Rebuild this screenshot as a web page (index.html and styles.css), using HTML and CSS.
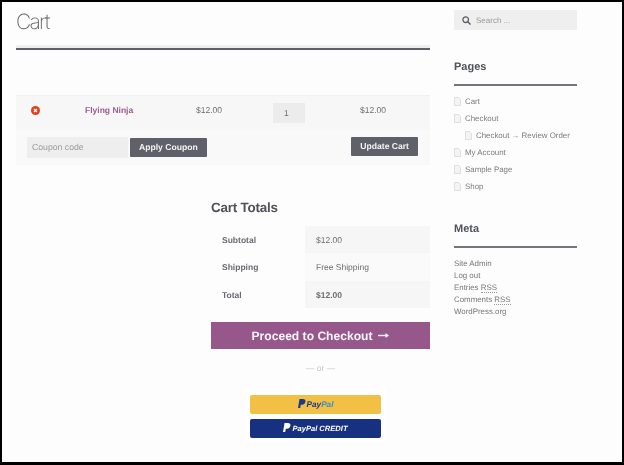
FILE: index.html
```html
<!DOCTYPE html>
<html lang="en">
<head>
<meta charset="utf-8">
<title>Cart</title>
<link rel="stylesheet" href="styles.css">
</head>
<body>
<div class="frame">
  <div class="page">
    <main class="main">
      <h1 class="title">Cart</h1>
      <div class="cart">
        <div class="row-item">
          <span class="c-remove"><svg width="9" height="9" viewBox="0 0 9 9"><circle cx="4.5" cy="4.5" r="4.5" fill="#e2401c"/><path d="M3 3l3 3M6 3l-3 3" stroke="#fff" stroke-width="1.3"/></svg></span>
          <a class="c-name">Flying Ninja</a>
          <span class="c-price">$12.00</span>
          <span class="c-qty"><span class="qty">1</span></span>
          <span class="c-total">$12.00</span>
        </div>
        <div class="row-actions">
          <div class="coupon">
            <span class="coupon-input">Coupon code</span>
            <span class="btn">Apply Coupon</span>
          </div>
          <span class="btn btn-update">Update Cart</span>
        </div>
      </div>
      <section class="totals">
        <h2 class="totals-title">Cart Totals</h2>
        <div class="totals-table">
          <div class="t-head">Subtotal</div><div class="t-val">$12.00</div>
          <div class="t-head t-alt">Shipping</div><div class="t-val t-alt">Free Shipping</div>
          <div class="t-head">Total</div><div class="t-val t-bold">$12.00</div>
        </div>
        <div class="checkout">Proceed to Checkout<svg class="arrow" width="11" height="7" viewBox="0 0 11 7"><path d="M0 3.5h10" stroke="#f8f3f7" stroke-width="1.4"/><path d="M7.5 1l3.5 2.5L7.5 6z" fill="#f8f3f7"/></svg></div>
        <div class="or">— or —</div>
        <div class="pp-box">
          <div class="pp pp-gold"><svg class="pp-mark" width="8" height="10" viewBox="0 0 8 10"><path d="M1.5 0h3.4C6.8 0 7.8 1 7.4 2.8 7 4.8 5.7 5.7 3.9 5.7H2.8L2.2 9H0z" fill="#1a3a8a"/></svg><span class="pp-a">Pay</span><span class="pp-b">Pal</span></div>
          <div class="pp pp-blue"><svg class="pp-mark" width="8" height="10" viewBox="0 0 8 10"><path d="M1.5 0h3.4C6.8 0 7.8 1 7.4 2.8 7 4.8 5.7 5.7 3.9 5.7H2.8L2.2 9H0z" fill="#fff"/></svg><span class="pp-w">PayPal</span><span class="pp-c">CREDIT</span></div>
        </div>
      </section>
    </main>
    <aside class="side">
      <div class="search"><svg width="9" height="9" viewBox="0 0 9 9"><circle cx="3.7" cy="3.7" r="2.8" fill="none" stroke="#5c5d66" stroke-width="1.3"/><path d="M5.8 5.8L8.5 8.5" stroke="#5c5d66" stroke-width="1.5"/></svg><span>Search ...</span></div>
      <h3 class="w-title w-pages">Pages</h3>
      <ul class="pages">
        <li><svg class="doc" viewBox="0 0 7 9"><path d="M.5.5h4l2 2v6h-6z" fill="#f4f4f4" stroke="#d8d8d8" stroke-width=".8"/></svg>Cart</li>
        <li><svg class="doc" viewBox="0 0 7 9"><path d="M.5.5h4l2 2v6h-6z" fill="#f4f4f4" stroke="#d8d8d8" stroke-width=".8"/></svg>Checkout</li>
        <li class="child"><svg class="doc" viewBox="0 0 7 9"><path d="M.5.5h4l2 2v6h-6z" fill="#f4f4f4" stroke="#d8d8d8" stroke-width=".8"/></svg>Checkout → Review Order</li>
        <li><svg class="doc" viewBox="0 0 7 9"><path d="M.5.5h4l2 2v6h-6z" fill="#f4f4f4" stroke="#d8d8d8" stroke-width=".8"/></svg>My Account</li>
        <li><svg class="doc" viewBox="0 0 7 9"><path d="M.5.5h4l2 2v6h-6z" fill="#f4f4f4" stroke="#d8d8d8" stroke-width=".8"/></svg>Sample Page</li>
        <li><svg class="doc" viewBox="0 0 7 9"><path d="M.5.5h4l2 2v6h-6z" fill="#f4f4f4" stroke="#d8d8d8" stroke-width=".8"/></svg>Shop</li>
      </ul>
      <h3 class="w-title w-meta">Meta</h3>
      <ul class="meta">
        <li>Site Admin</li>
        <li>Log out</li>
        <li>Entries <abbr>RSS</abbr></li>
        <li>Comments <abbr>RSS</abbr></li>
        <li>WordPress.org</li>
      </ul>
    </aside>
  </div>
</div>
</body>
</html>
```
FILE: styles.css
```css
* { box-sizing: border-box; }
html, body { margin: 0; padding: 0; background: #000; }
body { width: 624px; height: 465px; overflow: hidden; font-family: "Liberation Sans", Arial, sans-serif; font-size: 8.5px; color: #6d6d6d; text-rendering: geometricPrecision; }
.frame { width: 620px; height: 460px; margin: 2px 0 0 2px; background: #fdfdfd; overflow: hidden; }
.page { display: flex; filter: blur(0.35px); padding-left: 14px; }
.main { width: 414px; }
.side { width: 123px; margin-left: 24px; padding-top: 8px; }
.title { margin: 0; padding-top: 8px; height: 48px; border-bottom: 2px solid #5f6066; box-shadow: inset 0 -3px 0 #efefef; font-family: Inter, sans-serif; font-weight: 200; font-size: 21px; line-height: 26px; letter-spacing: -1.8px; color: #666; }
.cart { margin-top: 45px; }
.row-item { display: grid; grid-template-columns: 54px 126px 63px 86px 85px; height: 35px; padding-bottom: 7px; align-items: center; background: #f7f7f7; border-top: 1px solid #f0f0f0; }
.c-remove { display: flex; padding-left: 15px; margin-top: 2px; }
.c-name { color: #9a5c8f; font-weight: 700; padding-left: 15px; }
.c-qty { display: flex; padding-left: 14px; }
.qty { width: 32px; height: 20px; background: #ececec; line-height: 21px; padding-left: 11px; margin-top: 7px; }
.c-total { padding-left: 15px; }
.row-actions { display: flex; justify-content: space-between; align-items: center; height: 35px; background: #f9f9f9; padding: 0 12px 0 11px; }
.coupon { display: flex; gap: 2px; align-items: center; }
.coupon-input { width: 101px; height: 21px; background: #eeeeee; padding-left: 5px; line-height: 21px; color: #9a9a9a; font-size: 8.7px; }
.btn { display: block; height: 19px; background: #5f6069; color: #f4f4f4; font-weight: 700; font-size: 8.6px; line-height: 19px; padding: 0 9px; border-radius: 1px; }
.btn-update { margin-bottom: 2px; }
.totals { margin-left: 195px; width: 219px; }
.totals-title { margin: 34px 0 0; font-size: 13.4px; line-height: 18px; letter-spacing: -0.2px; color: #50525a; font-weight: 700; }
.totals-table { display: grid; grid-template-columns: 94px 125px; margin-top: 9px; grid-auto-rows: 27.4px; }
.t-head { font-weight: 700; padding-left: 11px; line-height: 28px; color: #6a6b72; }
.t-val { background: #f6f6f6; padding-left: 11px; line-height: 28px; }
.t-val.t-alt { background: #fafafa; }
.t-bold { font-weight: 700; }
.checkout { margin-top: 14px; height: 27px; background: #96588a; color: #f8f3f7; font-weight: 700; font-size: 12.1px; display: flex; align-items: center; justify-content: center; }
.arrow { margin-left: 6px; }
.or { text-align: center; margin-top: 13px; line-height: 12px; color: #c4c4c4; }
.pp-box { margin: 14px 0 0 34px; width: 141px; background: #fff; display: flex; flex-direction: column; gap: 5.5px; padding: 7px 5px 3px; }
.pp { height: 18.5px; border-radius: 2px; display: flex; align-items: center; justify-content: center; font-style: italic; font-weight: 700; font-size: 8.2px; }
.pp-gold { background: #f1c044; }
.pp-blue { background: #17307f; color: #fff; font-size: 7.6px; }
.pp-mark { margin-right: 1px; }
.pp-a { color: #1a3a8a; }
.pp-b { color: #3c8fc9; }
.pp-c { margin-left: 2px; }
.search { height: 20px; background: #efefef; display: flex; align-items: center; gap: 5px; padding-left: 8px; color: #9a9a9a; font-size: 8px; }
.w-title { margin: 0; font-size: 11px; line-height: 14px; color: #50525a; font-weight: 700; border-bottom: 2px solid #75767d; }
.w-pages { margin-top: 29px; height: 27px; padding-top: 1px; }
.w-meta { margin-top: 25px; height: 28px; padding-top: 2px; }
.pages, .meta { list-style: none; margin: 0; padding: 0; color: #7c7c7c; font-size: 7.9px; }
.pages { margin-top: 7px; }
.pages li { height: 17px; display: flex; align-items: center; gap: 4px; white-space: nowrap; }
.pages li.child { padding-left: 11px; }
.doc { width: 7px; height: 9px; flex: none; }
.meta { margin-top: 10px; line-height: 12px; color: #777; }
abbr { border-bottom: 1px dotted #999; }
```
